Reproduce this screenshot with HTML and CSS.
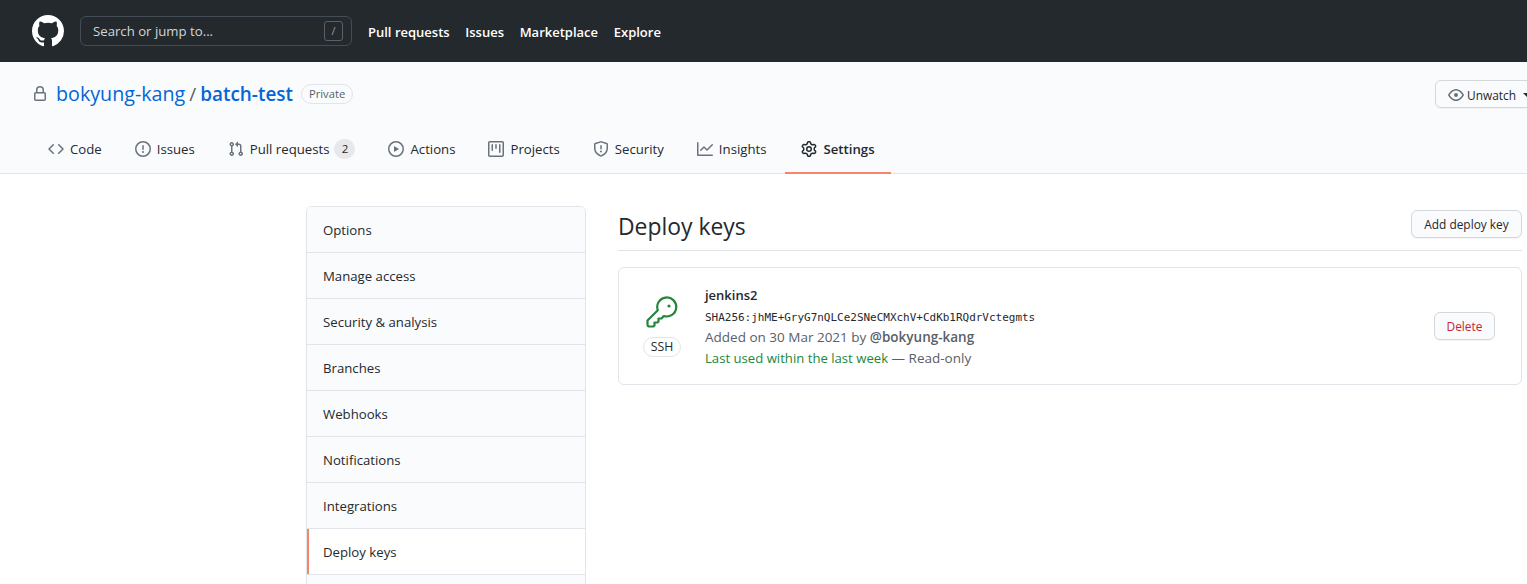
FILE: index.html
```html
<!DOCTYPE html>
<html lang="en">
<head>
<meta charset="utf-8">
<title>Deploy keys</title>
<link rel="stylesheet" href="styles.css">
</head>
<body>
<header class="topbar">
  <svg class="logo" viewBox="0 0 16 16"><path d="M8 0C3.58 0 0 3.58 0 8c0 3.54 2.29 6.53 5.47 7.59.4.07.55-.17.55-.38 0-.19-.01-.82-.01-1.49-2.01.37-2.53-.49-2.69-.94-.09-.23-.48-.94-.82-1.13-.28-.15-.68-.52-.01-.53.63-.01 1.08.58 1.23.82.72 1.21 1.87.87 2.33.66.07-.52.28-.87.51-1.07-1.78-.2-3.64-.89-3.64-3.95 0-.87.31-1.59.82-2.15-.08-.2-.36-1.02.08-2.12 0 0 .67-.21 2.2.82.64-.18 1.32-.27 2-.27.68 0 1.36.09 2 .27 1.53-1.04 2.2-.82 2.2-.82.44 1.1.16 1.92.08 2.12.51.56.82 1.27.82 2.15 0 3.07-1.87 3.75-3.65 3.95.29.25.54.73.54 1.48 0 1.07-.01 1.93-.01 2.2 0 .21.15.46.55.38A8.013 8.013 0 0016 8c0-4.42-3.58-8-8-8z"/></svg>
  <div class="search"><span>Search or jump to...</span><kbd class="slash">/</kbd></div>
  <nav class="topnav"><a>Pull requests</a><a>Issues</a><a>Marketplace</a><a>Explore</a></nav>
</header>
<section class="repohead">
  <div class="repotitle">
    <svg class="lock" viewBox="0 0 16 16"><path fill-rule="evenodd" d="M4 4v2h-.25A1.75 1.75 0 002 7.75v5.5c0 .966.784 1.75 1.75 1.75h8.5A1.75 1.75 0 0014 13.25v-5.5A1.75 1.75 0 0012.25 6H12V4a4 4 0 10-8 0zm6.5 2V4a2.5 2.5 0 00-5 0v2h5zM12 7.5h.25a.25.25 0 01.25.25v5.5a.25.25 0 01-.25.25h-8.5a.25.25 0 01-.25-.25v-5.5a.25.25 0 01.25-.25H12z"/></svg>
    <a class="owner">bokyung-kang</a><span class="sep">/</span><a class="repo">batch-test</a>
    <span class="private">Private</span>
    <button class="btn unwatch"><svg class="icon" viewBox="0 0 16 16"><path fill-rule="evenodd" d="M1.679 7.932c.412-.621 1.242-1.75 2.366-2.717C5.175 4.242 6.527 3.5 8 3.5c1.473 0 2.824.742 3.955 1.715 1.124.967 1.954 2.096 2.366 2.717a.119.119 0 010 .136c-.412.621-1.242 1.75-2.366 2.717C10.825 11.758 9.473 12.5 8 12.5c-1.473 0-2.824-.742-3.955-1.715C2.921 9.818 2.091 8.69 1.679 8.068a.119.119 0 010-.136zM8 2c-1.981 0-3.67.992-4.933 2.078C1.797 5.169.88 6.423.43 7.1a1.619 1.619 0 000 1.798c.45.678 1.367 1.932 2.637 3.024C4.329 13.008 6.019 14 8 14c1.981 0 3.67-.992 4.933-2.078 1.27-1.091 2.187-2.345 2.637-3.023a1.619 1.619 0 000-1.798c-.45-.678-1.367-1.932-2.637-3.023C11.671 2.992 9.981 2 8 2zm0 8a2 2 0 100-4 2 2 0 000 4z"/></svg>Unwatch<i class="caret"></i></button>
  </div>
  <nav class="tabs">
    <a class="tab"><svg class="icon" viewBox="0 0 16 16"><path fill-rule="evenodd" d="M4.72 3.22a.75.75 0 011.06 1.06L2.06 8l3.72 3.72a.75.75 0 11-1.06 1.06L.47 8.53a.75.75 0 010-1.06l4.25-4.25zm6.56 0a.75.75 0 10-1.06 1.06L13.94 8l-3.72 3.72a.75.75 0 101.06 1.06l4.25-4.25a.75.75 0 000-1.06l-4.25-4.25z"/></svg>Code</a>
    <a class="tab"><svg class="icon" viewBox="0 0 16 16"><path fill-rule="evenodd" d="M8 1.5a6.5 6.5 0 100 13 6.5 6.5 0 000-13zM0 8a8 8 0 1116 0A8 8 0 010 8zm9 3a1 1 0 11-2 0 1 1 0 012 0zm-.25-6.25a.75.75 0 00-1.5 0v3.5a.75.75 0 001.5 0v-3.5z"/></svg>Issues</a>
    <a class="tab"><svg class="icon" viewBox="0 0 16 16"><path fill-rule="evenodd" d="M7.177 3.073L9.573.677A.25.25 0 0110 .854v4.792a.25.25 0 01-.427.177L7.177 3.427a.25.25 0 010-.354zM3.75 2.5a.75.75 0 100 1.5.75.75 0 000-1.5zm-2.25.75a2.25 2.25 0 113 2.122v5.256a2.251 2.251 0 11-1.5 0V5.372A2.25 2.25 0 011.5 3.25zM11 2.5h-1V4h1a1 1 0 011 1v5.628a2.251 2.251 0 101.5 0V5A2.5 2.5 0 0011 2.5zm1 10.25a.75.75 0 111.5 0 .75.75 0 01-1.5 0zM3.75 12a.75.75 0 100 1.5.75.75 0 000-1.5z"/></svg>Pull requests<span class="counter">2</span></a>
    <a class="tab"><svg class="icon" viewBox="0 0 16 16"><path fill-rule="evenodd" d="M1.5 8a6.5 6.5 0 1113 0 6.5 6.5 0 01-13 0zM8 0a8 8 0 100 16A8 8 0 008 0zM6.379 5.227A.25.25 0 006 5.442v5.117a.25.25 0 00.379.214l4.264-2.559a.25.25 0 000-.428L6.379 5.227z"/></svg>Actions</a>
    <a class="tab"><svg class="icon" viewBox="0 0 16 16"><path fill-rule="evenodd" d="M1.75 0A1.75 1.75 0 000 1.75v12.5C0 15.216.784 16 1.75 16h12.5A1.75 1.75 0 0016 14.25V1.75A1.75 1.75 0 0014.25 0H1.75zM1.5 1.75a.25.25 0 01.25-.25h12.5a.25.25 0 01.25.25v12.5a.25.25 0 01-.25.25H1.75a.25.25 0 01-.25-.25V1.75zM11.75 3a.75.75 0 00-.75.75v7.5a.75.75 0 001.5 0v-7.5a.75.75 0 00-.75-.75zm-8.25.75a.75.75 0 011.5 0v5.5a.75.75 0 01-1.5 0v-5.5zM8 3a.75.75 0 00-.75.75v3.5a.75.75 0 001.5 0v-3.5A.75.75 0 008 3z"/></svg>Projects</a>
    <a class="tab"><svg class="icon" viewBox="0 0 16 16"><path fill-rule="evenodd" d="M7.467.133a1.75 1.75 0 011.066 0l5.25 1.68A1.75 1.75 0 0115 3.48V7c0 1.566-.32 3.182-1.303 4.682-.983 1.498-2.585 2.813-5.032 3.855a1.7 1.7 0 01-1.33 0c-2.447-1.042-4.049-2.357-5.032-3.855C1.32 10.182 1 8.566 1 7V3.48a1.75 1.75 0 011.217-1.667l5.25-1.68zm.61 1.429a.25.25 0 00-.153 0l-5.25 1.68a.25.25 0 00-.174.238V7c0 1.358.275 2.666 1.057 3.86.784 1.194 2.121 2.34 4.366 3.297a.2.2 0 00.154 0c2.245-.956 3.582-2.104 4.366-3.298C13.225 9.666 13.5 8.36 13.5 7V3.48a.25.25 0 00-.174-.237l-5.25-1.68zM9 10.5a1 1 0 11-2 0 1 1 0 012 0zm-.25-5.75a.75.75 0 10-1.5 0v3a.75.75 0 001.5 0v-3z"/></svg>Security</a>
    <a class="tab"><svg class="icon" viewBox="0 0 16 16"><path fill-rule="evenodd" d="M1.5 1.75a.75.75 0 00-1.5 0v12.5c0 .414.336.75.75.75h14.5a.75.75 0 000-1.5H1.5V1.75zm14.28 2.53a.75.75 0 00-1.06-1.06L10 7.94 7.53 5.47a.75.75 0 00-1.06 0L3.22 8.72a.75.75 0 001.06 1.06L7 7.06l2.47 2.47a.75.75 0 001.06 0l5.25-5.25z"/></svg>Insights</a>
    <a class="tab active"><svg class="icon" viewBox="0 0 16 16"><path fill-rule="evenodd" d="M7.429 1.525a6.593 6.593 0 011.142 0c.036.003.108.036.137.146l.289 1.105c.147.56.55.967.997 1.189.174.086.341.183.501.29.417.278.97.423 1.53.27l1.102-.303c.11-.03.175.016.195.046.219.31.41.641.573.989.014.031.022.11-.059.19l-.815.806c-.411.406-.562.957-.53 1.456a4.588 4.588 0 010 .582c-.032.499.119 1.05.53 1.456l.815.806c.08.08.073.159.059.19a6.494 6.494 0 01-.573.99c-.02.029-.086.074-.195.045l-1.103-.303c-.559-.153-1.112-.008-1.529.27-.16.107-.327.204-.5.29-.449.222-.851.628-.998 1.189l-.289 1.105c-.029.11-.101.143-.137.146a6.613 6.613 0 01-1.142 0c-.036-.003-.108-.037-.137-.146l-.289-1.105c-.147-.56-.55-.967-.997-1.189a4.502 4.502 0 01-.501-.29c-.417-.278-.97-.423-1.53-.27l-1.102.303c-.11.03-.175-.016-.195-.046a6.492 6.492 0 01-.573-.989c-.014-.031-.022-.11.059-.19l.815-.806c.411-.406.562-.957.53-1.456a4.587 4.587 0 010-.582c.032-.499-.119-1.05-.53-1.456l-.815-.806c-.08-.08-.073-.159-.059-.19a6.44 6.44 0 01.573-.99c.02-.029.086-.075.195-.045l1.103.303c.559.153 1.112.008 1.529-.27.16-.107.327-.204.5-.29.449-.222.851-.628.998-1.189l.289-1.105c.029-.11.101-.143.137-.146zM8 0c-.236 0-.47.01-.701.03-.743.065-1.29.615-1.458 1.261l-.29 1.106c-.017.066-.078.158-.211.224a5.994 5.994 0 00-.668.386c-.123.082-.233.09-.3.071L3.27 2.776c-.644-.177-1.392.02-1.82.63a7.977 7.977 0 00-.704 1.217c-.315.675-.111 1.422.363 1.891l.815.806c.05.048.098.147.088.294a6.084 6.084 0 000 .772c.01.147-.038.246-.088.294l-.815.806c-.474.469-.678 1.216-.363 1.891.2.428.436.835.704 1.218.428.609 1.176.806 1.82.63l1.103-.303c.066-.019.176-.011.299.071.213.143.436.272.668.386.133.066.194.158.212.224l.289 1.106c.169.646.715 1.196 1.458 1.26a8.094 8.094 0 001.402 0c.743-.064 1.29-.614 1.458-1.26l.29-1.106c.017-.066.078-.158.211-.224a5.98 5.98 0 00.668-.386c.123-.082.233-.09.3-.071l1.102.302c.644.177 1.392-.02 1.82-.63.268-.382.505-.789.704-1.217.315-.675.111-1.422-.364-1.891l-.814-.806c-.05-.048-.098-.147-.088-.294a6.1 6.1 0 000-.772c-.01-.147.039-.246.088-.294l.814-.806c.475-.469.679-1.216.364-1.891a7.992 7.992 0 00-.704-1.218c-.428-.609-1.176-.806-1.82-.63l-1.103.303c-.066.019-.176.011-.299-.071a5.991 5.991 0 00-.668-.386c-.133-.066-.194-.158-.212-.224L10.16 1.29C9.99.645 9.444.095 8.701.031A8.094 8.094 0 008 0zm1.5 8a1.5 1.5 0 11-3 0 1.5 1.5 0 013 0zM11 8a3 3 0 11-6 0 3 3 0 016 0z"/></svg>Settings</a>
  </nav>
</section>
<div class="layout">
  <aside class="side">
    <a class="side-item">Options</a>
    <a class="side-item">Manage access</a>
    <a class="side-item">Security &amp; analysis</a>
    <a class="side-item">Branches</a>
    <a class="side-item">Webhooks</a>
    <a class="side-item">Notifications</a>
    <a class="side-item">Integrations</a>
    <a class="side-item selected">Deploy keys</a>
    <a class="side-item"></a>
  </aside>
  <main class="main">
    <div class="subhead">
      <h2>Deploy keys</h2>
      <button class="btn add">Add deploy key</button>
    </div>
    <div class="keycard">
      <div class="keyicon">
        <svg class="key" viewBox="0 0 16 16"><path class="key-line" d="M8.9 10 7.75 11.25H6.25V12.75L5.75 13.25H4.25V14.75L3.75 15.25H1.75A1 1 0 0 1 .75 14.25V12.25L5.9 7.1A4.75 4.75 0 1 1 8.9 10Z"/><circle class="key-dot" cx="11.5" cy="5" r=".8"/></svg>
        <span class="ssh">SSH</span>
      </div>
      <div class="keyinfo">
        <strong class="keyname">jenkins2</strong>
        <code class="fingerprint">SHA256:jhME+GryG7nQLCe2SNeCMXchV+CdKb1RQdrVctegmts</code>
        <div class="meta">Added on 30 Mar 2021 by <b>@bokyung-kang</b></div>
        <div class="meta"><span class="used">Last used within the last week</span> — Read-only</div>
      </div>
      <button class="btn delete">Delete</button>
    </div>
  </main>
</div>
</body>
</html>
```
FILE: styles.css
```css
* { box-sizing: border-box; }
html, body { margin: 0; height: 584px; overflow: hidden; }
body { background: #fff; color: #24292e; font: 13px/20px "Open Sans", "Noto Sans", sans-serif; }

.topbar { height: 62px; background: #24292e; display: flex; align-items: center; padding-left: 32px; }
.logo { width: 32px; height: 32px; fill: #fff; flex: none; }
.search { width: 272px; height: 30px; margin-left: 16px; border: 1px solid #444d56; border-radius: 6px; display: flex; align-items: center; justify-content: space-between; padding: 0 8px 0 12px; color: #d1d5da; font-size: 13.2px; }
.slash { width: 19px; height: 20px; border: 1px solid #586069; border-radius: 3px; font: 11px/18px "Open Sans", sans-serif; color: #959da5; text-align: center; }
.topnav { display: flex; gap: 15.67px; margin-left: 16px; padding-top: 1px; }
.topnav a { color: #fff; font-weight: 600; }

.repohead { height: 112px; background: #fafbfc; border-bottom: 1px solid #e1e4e8; display: flex; flex-direction: column; justify-content: space-between; }
.repotitle { display: flex; align-items: center; height: 28px; margin-top: 18px; padding-left: 32px; }
.lock { width: 16px; height: 16px; fill: #6a737d; margin-right: 8px; flex: none; }
.owner { color: #0366d6; font-size: 19.7px; line-height: 28px; }
.repo { color: #0366d6; font-size: 18.9px; line-height: 28px; font-weight: 600; }
.sep { color: #586069; font-size: 19px; margin: 0 4px; }
.private { margin-left: 8px; height: 20px; padding: 0 7px; border: 1px solid #e1e4e8; border-radius: 2em; font-size: 11.2px; line-height: 18px; color: #586069; font-weight: 500; }

.btn { font: 500 11.9px/20px "Open Sans", sans-serif; color: #24292e; background: #fafbfc; border: 1px solid #d5d8da; border-radius: 6px; box-shadow: 0 1px 0 rgba(27, 31, 35, .04); padding: 3px 12px; white-space: nowrap; }
.unwatch { margin-left: auto; flex: none; height: 28px; width: 110px; display: flex; align-items: center; padding: 1px 12px 0; position: relative; left: 18px; }
.unwatch .icon { margin-right: 3px; }
.caret { width: 0; height: 0; margin-left: 7px; border: 4px solid transparent; border-top-color: #24292e; border-bottom: 0; }

.tabs { display: flex; gap: 1px; padding-left: 32px; height: 48px; font-size: 13.2px; }
.tab { display: flex; align-items: center; padding: 0 16px; color: #24292e; margin-bottom: -1px; height: 49px; border-bottom: 2px solid transparent; }
.icon { width: 16px; height: 16px; fill: #6a737d; margin-right: 6px; flex: none; }
.tab.active { font-weight: 600; border-bottom-color: #f9826c; margin-left: 2px; }
.tab.active .icon { fill: #24292e; }
.counter { min-width: 21px; height: 20px; margin-left: 5px; border-radius: 2em; background: #e6e8eb; font-size: 11.5px; font-weight: 500; line-height: 20px; text-align: center; padding: 0 6px; }

.layout { display: flex; gap: 32px; padding: 32px 0 0 306px; width: 1522px; }
.side { width: 280px; flex: none; border: 1px solid #e1e4e8; border-radius: 6px; overflow: hidden; font-size: 13.2px; }
.side-item { display: block; height: 46px; padding: 13px 16px 0; background: #fafbfc; border-bottom: 1px solid #e1e4e8; color: #24292e; }
.side-item.selected { background: #fff; box-shadow: inset 2px 0 0 #f9826c; }

.main { flex: 1; min-width: 0; }
.subhead { height: 41px; display: flex; justify-content: space-between; align-items: flex-start; border-bottom: 1px solid #e1e4e8; margin-top: 4px; }
.subhead h2 { margin: 0; padding-top: 1px; font-size: 22.9px; line-height: 32px; font-weight: 400; }
.add { height: 28px; width: 111px; padding: 0; }
.keycard { margin-top: 16px; height: 118px; border: 1px solid #e1e4e8; border-radius: 6px; display: flex; align-items: center; padding-left: 24px; }
.keyicon { width: 38px; display: flex; flex-direction: column; align-items: center; gap: 9px; flex: none; margin-top: 1px; }
.key { width: 32px; height: 32px; }
.key-line { fill: none; stroke: #22863a; stroke-width: 1.1; stroke-linejoin: round; }
.key-dot { fill: #22863a; }
.ssh { height: 20px; padding: 0 7px; border: 1px solid #e1e4e8; border-radius: 2em; font-size: 12.3px; line-height: 18px; color: #24292e; }
.keyinfo { margin-left: 24px; flex: 1; display: flex; flex-direction: column; padding-top: 1px; }
.keyname { font-weight: 600; line-height: 20px; margin-bottom: 3px; }
.fingerprint { font: 10.98px/19px "DejaVu Sans Mono", monospace; color: #24292e; }
.meta { color: #586069; line-height: 21px; font-size: 13.5px; }
.meta b { font-weight: 600; }
.used { color: #22863a; font-size: 13.15px; }
.delete { color: #cb2431; width: 61px; height: 28px; padding: 0; margin-right: 26px; font-weight: 400; }
```
